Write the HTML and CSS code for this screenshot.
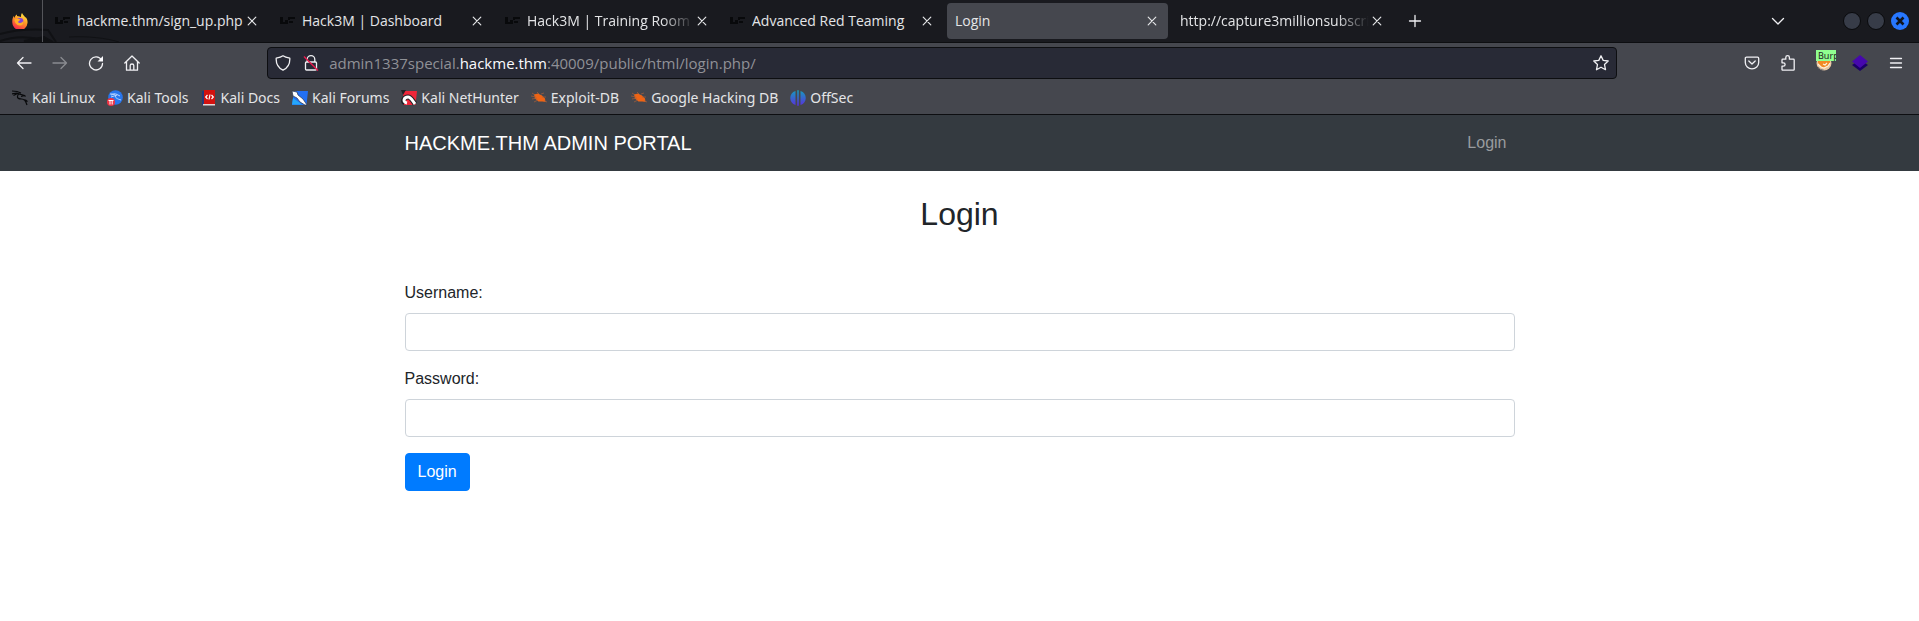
FILE: index.html
```html
<!DOCTYPE html>
<html lang="en">
<head>
<meta charset="utf-8">
<title>Login</title>
<link rel="stylesheet" href="styles.css">
</head>
<body>
<svg class="defs" aria-hidden="true">
  <symbol id="favicon" viewBox="0 0 16 16"><path fill="#08090b" d="M0 4h3v5h2V7h3v4H0zM8 4h7v2H10v1H8zM9 8h4v2H9z"/></symbol>
  <symbol id="close" viewBox="0 0 16 16"><path fill="none" stroke="#e4e5e7" stroke-width="1.2" stroke-linecap="round" d="M4.200 4.200l7.600 7.600M11.800 4.200l-7.600 7.600"/></symbol>
  <symbol id="bug" viewBox="0 0 16 16"><path fill="#f06414" d="M3 4.500l4-1 4 2 3 3 .5 3.500-3-.5-4 0-3.500-3z"/><path fill="none" stroke="#a8603c" stroke-width=".7" d="M0 6l5 1M1 9l5-1M3 12l4-2M6 2l3 3M10 4l3-1M11 7l4 0M13 11l3 1M1 3l3 2"/></symbol>
</svg>

<header class="browser">
  <div class="tabbar">
    <svg class="dragon" viewBox="0 0 140 42" aria-hidden="true"><g fill="none" stroke="#101114" stroke-width="2"><path d="M0 34C15 30 33 29 48 30L56 42M0 41C16 35 32 37 44 40"/><path fill="#101114" d="M24 41L44 37L53 42z"/><path stroke-width="1" d="M69 37C88 36 106 38 119 42"/></g></svg>
    <button class="pinned" aria-label="Firefox View">
      <svg class="i16" viewBox="0 0 16 16"><defs><linearGradient id="fire" x1=".8" y1="0" x2=".3" y2="1"><stop offset="0" stop-color="#fff04a"/><stop offset=".45" stop-color="#ff9a24"/><stop offset="1" stop-color="#f5214e"/></linearGradient></defs><path fill="url(#fire)" d="M10 0c1 2 2 2.700 3 4 2 1 2.800 3.500 2.500 6A7.600 7.600 0 0 1 .3 9C.1 6 1 4 2 3l.2 2C3 4 3 2.500 5 1.500V3c2 .2 3 .5 4 1 0-1 0-3 1-4z"/><circle cx="8" cy="8.500" r="3.400" fill="#8140dc"/><path fill="#ffad28" d="M2.500 6.500C5 5 6.500 6 8.500 6.500L7 8C5.500 8.500 6 10 8 10c1.500 0 3-1 3.300-2.500 1 3-1 5.300-3.600 5C4.500 12.300 2.500 9.500 2.500 6.500z"/></svg>
    </button>
    <nav class="tabs" aria-label="Tabs">
      <div class="tab"><svg class="i16"><use href="#favicon"/></svg><span class="tab-title">hackme.thm/sign_up.php</span><button class="tab-close" aria-label="Close tab"><svg class="i16"><use href="#close"/></svg></button></div>
      <div class="tab"><svg class="i16"><use href="#favicon"/></svg><span class="tab-title">Hack3M | Dashboard</span><button class="tab-close" aria-label="Close tab"><svg class="i16"><use href="#close"/></svg></button></div>
      <div class="tab"><svg class="i16"><use href="#favicon"/></svg><span class="tab-title fade">Hack3M | Training Room 1</span><button class="tab-close" aria-label="Close tab"><svg class="i16"><use href="#close"/></svg></button></div>
      <div class="tab"><svg class="i16"><use href="#favicon"/></svg><span class="tab-title">Advanced Red Teaming</span><button class="tab-close" aria-label="Close tab"><svg class="i16"><use href="#close"/></svg></button></div>
      <div class="tab active"><span class="tab-title">Login</span><button class="tab-close" aria-label="Close tab"><svg class="i16"><use href="#close"/></svg></button></div>
      <div class="tab"><span class="tab-title fade">http://capture3millionsubscri</span><button class="tab-close" aria-label="Close tab"><svg class="i16"><use href="#close"/></svg></button></div>
    </nav>
    <button class="tool" aria-label="New tab"><svg class="i16" viewBox="0 0 16 16"><path class="line" d="M8 2.500v11M2.500 8h11"/></svg></button>
    <button class="tool all-tabs" aria-label="List all tabs"><svg class="i16" viewBox="0 0 16 16"><path class="line" d="M2.500 5.500L8 11l5.500-5.500"/></svg></button>
    <div class="window-buttons">
      <button class="win" aria-label="Minimize"></button>
      <button class="win" aria-label="Maximize"></button>
      <button class="win win-close" aria-label="Close"><svg viewBox="0 0 18 18"><path d="M5.500 5.500l7 7M12.500 5.500l-7 7" stroke="#10141c" stroke-width="2.600"/></svg></button>
    </div>
  </div>

  <div class="toolbar">
    <div class="tools">
      <button class="tool" aria-label="Back"><svg class="i16" viewBox="0 0 16 16"><path class="line" d="M15 8H1.500M7 2.500L1.500 8 7 13.500"/></svg></button>
      <button class="tool off" aria-label="Forward" disabled><svg class="i16" viewBox="0 0 16 16"><path class="line" d="M1 8h13.500M9 2.500L14.500 8 9 13.500"/></svg></button>
      <button class="tool" aria-label="Reload"><svg class="i16" viewBox="0 0 16 16"><path class="line" d="M13.500 5A6.500 6.500 0 1 0 14.500 8.500"/><path fill="#fbfbfe" d="M15 1v5.500H9.500z"/></svg></button>
      <button class="tool" aria-label="Home"><svg class="i16" viewBox="0 0 16 16"><path class="line" d="M.8 8L8 1l7.200 7M2.500 6.500v8.700h11V6.500M6.200 15v-4.500c0-2 3.600-2 3.600 0V15"/></svg></button>
    </div>
    <div class="spring"></div>
    <div class="urlbar">
      <svg class="i16" viewBox="0 0 16 16"><path class="line" d="M8 .8c2 1.500 4.500 2 6.800 2.400.3 5.300-1.400 9.300-6.800 12C2.600 12.500.9 8.500 1.200 3.200 3.500 2.800 6 2.300 8 .8z"/></svg>
      <svg class="i16 lock" viewBox="0 0 16 16"><path class="line" d="M4.200 7V4.500a3.800 3.800 0 0 1 7.600 0V7M3.500 7h9q1 0 1 1v6q0 1-1 1h-9q-1 0-1-1V8q0-1 1-1z"/><path d="M1 1.500l14 14" stroke="#e5194c" stroke-width="1.500"/></svg>
      <div class="address" role="textbox" aria-label="Address" contenteditable="true" spellcheck="false">admin1337special.<span class="host">hackme.thm</span>:40009/public/html/login.php/</div>
      <button class="star" aria-label="Bookmark this page"><svg class="i16" viewBox="0 0 16 16"><path class="line" d="M8 .8l2.200 4.600 5 .6-3.700 3.500 1 5.200L8 12.200l-4.500 2.500 1-5.200L.8 6l5-.6z"/></svg></button>
    </div>
    <div class="spring"></div>
    <div class="tools">
      <button class="tool" aria-label="Pocket"><svg class="i16" viewBox="0 0 16 16"><path class="line" d="M2.500 2.200h11q1.200 0 1.200 1.200v4.200a6.700 6.200 0 0 1-13.400 0V3.400q0-1.200 1.200-1.200zM4.800 6L8 9l3.200-3"/></svg></button>
      <button class="tool" aria-label="Extensions"><svg class="i16" viewBox="0 0 16 16"><path class="line" d="M2 5q0-.8.800-.8h3V2.500a1.800 1.800 0 0 1 3.600 0v1.700h4q.8 0 .8.800v9.400q0 .8-.8.800H2.800q-.8 0-.8-.8v-3.200h1.400a1.700 1.700 0 0 0 0-3.400H2z"/></svg></button>
      <button class="tool" aria-label="Proxy: Burp"><svg class="i16" viewBox="0 0 16 16"><circle cx="8" cy="8" r="7.500" fill="#e8c7a2"/><path fill="#f28a24" d="M2 4h12v4l-3 4-3 1-4-2-2-3z"/><path fill="none" stroke="#fff0d8" stroke-width="1.200" d="M2 9l3 3 3 1 4-2 2-3M7 9l2 1 2-2"/><path fill="none" stroke="#7d7778" d="M2 12q2 3 6 3.300"/></svg><span class="badge">Burp</span></button>
      <button class="tool" aria-label="Wappalyzer"><svg class="i16" viewBox="0 0 16 16"><path fill="#1b0067" d="M0 10l3-2h10l3 2-8 6z"/><path fill="#4608ad" d="M0 6.500L8 0l8 6.500L8 13z"/></svg></button>
      <button class="tool" aria-label="Menu"><svg class="i16" viewBox="0 0 16 16"><path class="line" d="M2.500 3.500h11M2.500 8h11M2.500 12.500h11"/></svg></button>
    </div>
  </div>

  <nav class="bookmarks" aria-label="Bookmarks">
    <a href="#"><svg class="i16" viewBox="0 0 16 16"><path fill="none" stroke="#090a0c" stroke-width="1.200" d="M0 1l5 .5 4 1.500M0 3.800l5-.8M1.500 5.500l4-2 3 .8 4 1.200 1 1M6.500 4c-2.500 4 0 5 3 5s4 1.500 5.500 6M9 6.300l4-.8M11.500 9.700c2 .3 3 .5 4 2"/></svg>Kali Linux</a>
    <a href="#"><svg class="i16" viewBox="0 0 16 16"><circle cx="8.500" cy="7.500" r="7.300" fill="#2876ed"/><path fill="none" stroke="#b7d4ff" stroke-width="1" d="M3 4l6 0 4 2M4 7l6-2M9 5c-2 3 2 4 5 5M4 5l4-1"/><circle cx="4" cy="12" r="4" fill="#ef3344"/><path fill="none" stroke="#fff" stroke-width="1" d="M1.500 10.500h5M3 10.500v4M5.200 10.500v4"/></svg>Kali Tools</a>
    <a href="#"><svg class="i16" viewBox="0 0 16 16"><path fill="#243b7a" d="M1 1h3v14H1z"/><path fill="#d3120f" d="M3 0h11v14H3z"/><path fill="#e4d7d6" d="M2 14h12v1.500H2z"/><path fill="none" stroke="#fff" stroke-width="1.200" d="M6.500 5L4.700 7l1.800 2M9 4.500L8 9.500M10.500 5l1.800 2-1.800 2"/></svg>Kali Docs</a>
    <a href="#"><svg class="i16" viewBox="0 0 16 16"><path fill="#2370f3" d="M2 1h14l-1.500 14H0z"/><path fill="#25a8fa" d="M1 8l9 6.500H0z"/><path fill="#fff" stroke="#28344c" stroke-width=".7" d="M0 1l5 1 1 3 5 4 4 6-2 0-5-3-3-4-4-2z"/></svg>Kali Forums</a>
    <a href="#"><svg class="i16" viewBox="0 0 16 16"><path fill="#ef2639" d="M2 1h14l-1.500 14H2z"/><path fill="none" stroke="#202126" stroke-width="5" d="M4 13c-3-2-1-6 3-6 3 0 4 3 7 7"/><path fill="none" stroke="#fff" stroke-width="3" d="M6 13c-5-1-3-6 1-6 3 0 4 3 7 7"/><path fill="#202126" d="M0 0h5L2 5z"/></svg>Kali NetHunter</a>
    <a href="#"><svg class="i16"><use href="#bug"/></svg>Exploit-DB</a>
    <a href="#"><svg class="i16"><use href="#bug"/></svg>Google Hacking DB</a>
    <a href="#"><svg class="i16" viewBox="0 0 16 16"><defs><linearGradient id="off" x1="0" y1="0" x2="0" y2="1"><stop offset="0" stop-color="#159cbd"/><stop offset="1" stop-color="#5930dd"/></linearGradient></defs><path fill="url(#off)" d="M5.500 1v14C-1.500 13-1.500 3 5.500 1zM7.200.3h1.600v15.400H7.200zM10.500 1v14c7-2 7-12 0-14z"/></svg>OffSec</a>
  </nav>
</header>

<nav class="navbar">
  <div class="container navbar-row">
    <a class="brand" href="#">HACKME.THM ADMIN PORTAL</a>
    <a class="nav-link" href="#">Login</a>
  </div>
</nav>

<main class="container">
  <h2 class="heading">Login</h2>
  <form>
    <div class="field"><label for="username">Username:</label><input id="username" type="text"></div>
    <div class="field"><label for="password">Password:</label><input id="password" type="password"></div>
    <button class="submit" type="submit">Login</button>
  </form>
</main>
</body>
</html>
```
FILE: styles.css
```css
* { box-sizing: border-box; }

body {
  margin: 0;
  background: #fff;
  color: #212529;
  font: 16px/24px "Liberation Sans", Arial, sans-serif;
}

button {
  border: 0;
  padding: 0;
  background: none;
  color: inherit;
  font: inherit;
}

a { color: inherit; text-decoration: none; }
svg { display: block; }
.defs { position: absolute; width: 0; height: 0; }
.i16 { width: 16px; height: 16px; flex: none; }
.line {
  fill: none;
  stroke: #f0f0f3;
  stroke-width: 1.3;
  stroke-linecap: round;
  stroke-linejoin: round;
}

/* Browser chrome */
.browser {
  background: #45474e;
  border-bottom: 1px solid #0d0e11;
  color: #e4e5e7;
  font: 14px/20px "Noto Sans", sans-serif;
}

.tabbar {
  position: relative;
  display: flex;
  align-items: center;
  height: 43px;
  padding-right: 10px;
  background: #191a1f;
  border-bottom: 1px solid #0d0e11;
}

.dragon { position: absolute; left: 0; bottom: 0; width: 140px; height: 42px; }

.pinned {
  position: relative;
  display: grid;
  place-items: center;
  width: 43px;
  height: 42px;
  padding-right: 2px;
  border-right: 1px solid #54555a;
}

.tabs { position: relative; display: flex; gap: 4px; flex: 0 1 1354px; min-width: 0; padding: 0 4px; }

.tab {
  display: flex;
  align-items: center;
  gap: 6px;
  flex: 1 1 221px;
  min-width: 0;
  height: 36px;
  padding: 0 8px;
  border-radius: 4px;
  font-family: "Open Sans", "Noto Sans", sans-serif;
}

.tab.active { background: #45474e; }
.tab-title { flex: 1; min-width: 0; overflow: hidden; white-space: nowrap; }
.tab-title.fade { mask-image: linear-gradient(to right, #000 calc(100% - 32px), transparent); }
.tab-close { margin-left: -6px; }

.tool {
  position: relative;
  display: grid;
  place-items: center;
  width: 36px;
  height: 32px;
  flex: none;
}

.off { opacity: .4; }
.all-tabs { margin-left: auto; }
.window-buttons { display: flex; gap: 6px; margin-left: 47px; }

.win {
  width: 18px;
  height: 18px;
  border: 1px solid #090a0c;
  border-radius: 50%;
  background: #373c48;
}

.win-close { border: 0; background: #2777ff; }

.toolbar { display: flex; align-items: center; height: 40px; padding: 0 5px 0 6px; }
.tools { display: flex; flex: none; }
.spring { flex: 117 1 0; }

.urlbar {
  display: flex;
  align-items: center;
  flex: 1332 1 0;
  min-width: 0;
  height: 32px;
  padding: 0 7px;
  background: #282a36;
  border: 1px solid #0d0e11;
  border-radius: 4px;
}

.lock { margin-left: 12px; }

.address {
  flex: 1;
  min-width: 0;
  margin-left: 10px;
  overflow: hidden;
  outline: 0;
  color: #909197;
  font-family: "Open Sans", "Noto Sans", sans-serif;
  font-size: 15px;
  white-space: nowrap;
}

.host { color: #fbfbfe; }

.badge {
  position: absolute;
  top: 3px;
  right: 6px;
  width: 20px;
  height: 11px;
  padding-left: 2px;
  overflow: hidden;
  background: #90ff90;
  color: #222;
  font-size: 9px;
  line-height: 11px;
  text-align: left;
}

.bookmarks { display: flex; gap: 12px; height: 31px; padding: 4px 12px; overflow: hidden; }
.bookmarks a { display: flex; align-items: center; gap: 4px; height: 22px; white-space: nowrap; }

/* Page */
.container { width: 100%; max-width: 1140px; margin: 0 auto; padding: 0 15px; }
.navbar { padding: 8px 16px; background: #343a40; }
.navbar-row { display: flex; align-items: center; justify-content: space-between; }
.brand { color: #fff; font-size: 20px; line-height: 30px; }
.nav-link { padding: 8px; color: #999c9f; }
.heading { margin: 24px 0 48px; font-size: 32px; line-height: 38px; font-weight: 500; text-align: center; }
.field { margin-bottom: 16px; }
.field label { display: block; margin-bottom: 8px; }

.field input {
  display: block;
  width: 100%;
  height: 38px;
  padding: 6px 12px;
  border: 1px solid #ced4da;
  border-radius: 4px;
  background: #fff;
  color: #495057;
  font: inherit;
}

.submit {
  padding: 6px 12px;
  border: 1px solid #007bff;
  border-radius: 4px;
  background: #007bff;
  color: #fff;
}
```
